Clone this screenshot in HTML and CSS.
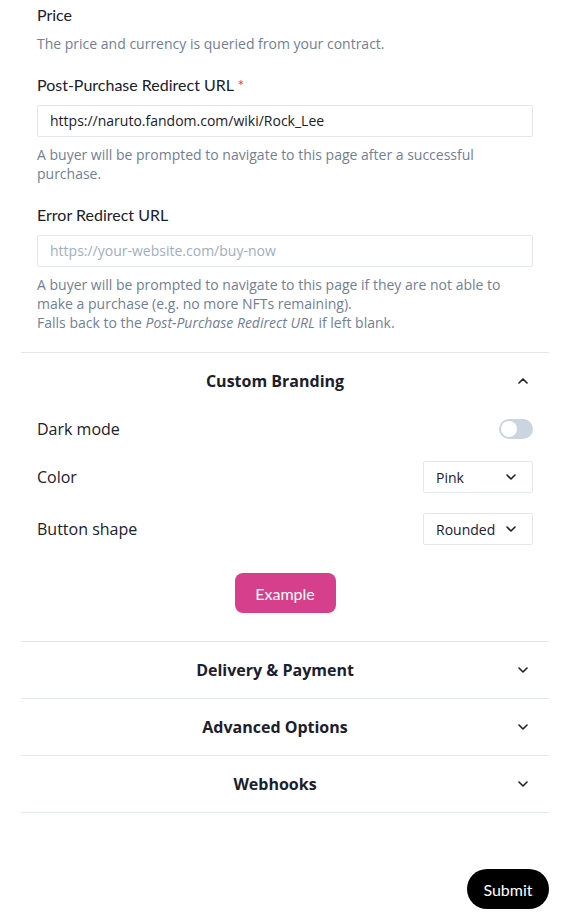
FILE: index.html
```html
<!DOCTYPE html>
<html>
<head>
<meta charset="utf-8">
<link rel="stylesheet" href="styles.css">
</head>
<body>
<div class="page">
  <div class="fields">
    <div class="field">
      <div class="label">Price</div>
      <div class="help first">The price and currency is queried from your contract.</div>
    </div>
    <div class="field">
      <div class="label">Post-Purchase Redirect URL <span class="req">*</span></div>
      <div class="input">https://naruto.fandom.com/wiki/Rock_Lee</div>
      <div class="help">A buyer will be prompted to navigate to this page after a successful purchase.</div>
    </div>
    <div class="field">
      <div class="label">Error Redirect URL</div>
      <div class="input placeholder">https://your-website.com/buy-now</div>
      <div class="help">A buyer will be prompted to navigate to this page if they are not able to make a purchase (e.g. no more NFTs remaining).<br>Falls back to the <em>Post-Purchase Redirect URL</em> if left blank.</div>
    </div>
  </div>

  <div class="section open">
    <div class="section-head">
      <span class="section-title">Custom Branding</span>
      <span class="chev"><svg viewBox="0 0 10 6" width="10" height="6"><path d="M1 5 L5 1 L9 5" fill="none" stroke="#1a202c" stroke-width="1.6" stroke-linecap="round" stroke-linejoin="round"/></svg></span>
    </div>
    <div class="section-body">
      <div class="row row-toggle">
        <span class="row-label">Dark mode</span>
        <span class="toggle"><span class="knob"></span></span>
      </div>
      <div class="row">
        <span class="row-label">Color</span>
        <div class="select"><span>Pink</span>
          <svg viewBox="0 0 10 6" width="10" height="6"><path d="M1 1 L5 5 L9 1" fill="none" stroke="#1a202c" stroke-width="1.6" stroke-linecap="round" stroke-linejoin="round"/></svg>
        </div>
      </div>
      <div class="row">
        <span class="row-label">Button shape</span>
        <div class="select"><span>Rounded</span>
          <svg viewBox="0 0 10 6" width="10" height="6"><path d="M1 1 L5 5 L9 1" fill="none" stroke="#1a202c" stroke-width="1.6" stroke-linecap="round" stroke-linejoin="round"/></svg>
        </div>
      </div>
      <div class="example-wrap"><button class="example">Example</button></div>
    </div>
  </div>

  <div class="section">
    <div class="section-head">
      <span class="section-title">Delivery &amp; Payment</span>
      <span class="chev"><svg viewBox="0 0 10 6" width="10" height="6"><path d="M1 1 L5 5 L9 1" fill="none" stroke="#1a202c" stroke-width="1.6" stroke-linecap="round" stroke-linejoin="round"/></svg></span>
    </div>
  </div>
  <div class="section">
    <div class="section-head">
      <span class="section-title">Advanced Options</span>
      <span class="chev"><svg viewBox="0 0 10 6" width="10" height="6"><path d="M1 1 L5 5 L9 1" fill="none" stroke="#1a202c" stroke-width="1.6" stroke-linecap="round" stroke-linejoin="round"/></svg></span>
    </div>
  </div>
  <div class="section last">
    <div class="section-head">
      <span class="section-title">Webhooks</span>
      <span class="chev"><svg viewBox="0 0 10 6" width="10" height="6"><path d="M1 1 L5 5 L9 1" fill="none" stroke="#1a202c" stroke-width="1.6" stroke-linecap="round" stroke-linejoin="round"/></svg></span>
    </div>
  </div>

  <div class="actions"><button class="submit">Submit</button></div>
</div>
</body>
</html>
```

FILE: styles.css
```css
* { box-sizing: border-box; }
html, body { margin: 0; padding: 0; background: #fff; }
body { font-family: "Open Sans", "Noto Sans", sans-serif; color: #1a202c; }

.page { margin: 0 19px 0 21px; padding-top: 5px; }

.fields { padding: 0 16px; }
.field { margin-bottom: 22px; }
.field:first-child { margin-bottom: 21px; }
.field:last-child { margin-bottom: 20px; }

.label {
  font-family: "Lato", "Inter", sans-serif;
  font-size: 16px;
  line-height: 20px;
  color: #1a202c;
}
.req { color: #e53e3e; }

.input {
  margin-top: 10px;
  height: 32px;
  border: 1px solid #e2e8f0;
  border-radius: 2px;
  padding: 0 12px;
  font-size: 14px;
  line-height: 30px;
  color: #1a202c;
}
.input.placeholder { color: #a0aec0; }

.help {
  margin-top: 8px;
  font-size: 14px;
  line-height: 19px;
  color: #718096;
}
.help.first { margin-top: 9px; line-height: 20px; }

.section { border-top: 1px solid #e2e8f0; }
.section.last { border-bottom: 1px solid #e2e8f0; }

.section-head {
  height: 56px;
  display: flex;
  align-items: center;
  padding: 0 16px;
}
.section-title {
  flex: 1;
  text-align: center;
  font-weight: 700; font-size: 16px; color: #1a202c;
}
.chev { width: 20px; display: flex; justify-content: center; align-items: center; }

.section-body { padding: 8px 16px 28px; }
.row {
  display: flex;
  align-items: center;
  justify-content: space-between;
  height: 32px;
  margin-top: 20px;
}
.row-toggle { height: 24px; margin-top: 0; }
.row-label { font-size: 16px; color: #1a202c; }

.toggle {
  width: 34px; height: 20px;
  border-radius: 10px;
  background: #cbd5e0;
  display: flex; align-items: center; padding: 2px;
}
.knob { width: 16px; height: 16px; border-radius: 50%; background: #fff; }

.select {
  width: 110px; height: 32px;
  border: 1px solid #e2e8f0;
  border-radius: 2px;
  display: flex; align-items: center; justify-content: space-between;
  padding: 0 16px 0 12px;
  font-size: 14px;
}

.example-wrap { display: flex; justify-content: center; margin-top: 28px; }
.example {
  width: 101px; height: 40px;
  border: none; border-radius: 8px;
  background: #d53f8c; color: #fff;
  font-family: "Lato", "Inter", sans-serif; font-size: 16px;
}

.actions { display: flex; justify-content: flex-end; margin-top: 56px; }
.submit {
  width: 82px; height: 40px;
  border: none; border-radius: 20px;
  background: #000; color: #fff;
  font-family: "Lato", "Inter", sans-serif; font-size: 16px;
}
```
